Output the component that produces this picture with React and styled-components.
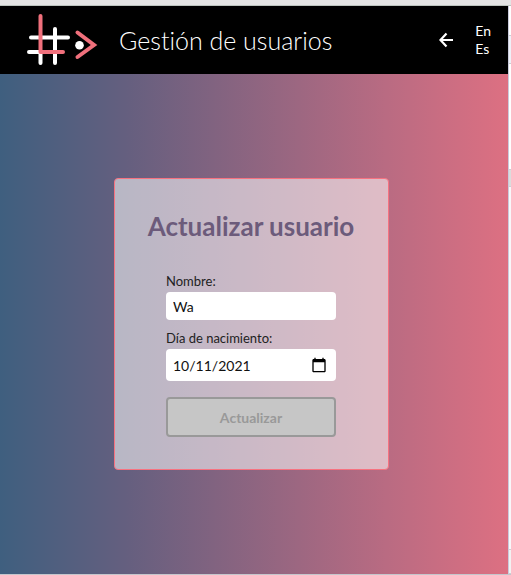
import React from "react";
import styled, { createGlobalStyle } from "styled-components";

const GlobalStyle = createGlobalStyle`
  * { box-sizing: border-box; }
  body {
    margin: 0;
    font-family: Lato, "Open Sans", sans-serif;
    font-variant-ligatures: none;
    background: #f2f2f5;
  }
  button, input { font-family: inherit; }
`;

const Frame = styled.div`
  display: grid;
  grid-template-columns: minmax(0, 1fr) 3px;
  grid-template-rows: 6px minmax(0, 1fr) 1px;
  min-height: 100vh;
`;

const TopEdge = styled.div`
  grid-column: 1 / -1;
  background: #e4e4e4;
  border-bottom: 1px solid #bcc4be;
`;

const BottomEdge = styled.div`
  grid-column: 1 / -1;
  background: #c4c6cc;
`;

const SideEdge = styled.div`
  display: grid;
  grid-template-rows: 30px 28px 106px 17px 1fr 24px;
  border-left: 1px solid #c9cbdc;
`;

const EdgePart = styled.div`
  background: ${({ $tone }) => $tone};
  border-bottom: 1px solid #cdced4;
`;

const Page = styled.div`
  display: flex;
  flex-direction: column;
`;

const Header = styled.header`
  display: flex;
  align-items: center;
  height: 68px;
  padding: 0 17px 0 24px;
  background: #000;
  color: #fff;
`;

const Logo = styled.svg`
  flex: none;
  width: 76px;
  height: 68px;
`;

const Title = styled.h1`
  flex: 1;
  margin: 0 0 0 19px;
  font-size: 25px;
  line-height: 32px;
  font-weight: 300;
  white-space: nowrap;
`;

const BackButton = styled.button`
  display: flex;
  margin-right: 20px;
  padding: 0;
  border: 0;
  background: none;
  color: inherit;
`;

const Languages = styled.nav`
  display: flex;
  flex-direction: column;
`;

const LanguageButton = styled.button`
  padding: 0;
  border: 0;
  background: none;
  color: inherit;
  font-size: 14px;
  line-height: 18px;
  text-align: left;
`;

const Main = styled.main`
  flex: 1;
  display: flex;
  align-items: center;
  justify-content: center;
  padding: 24px 6px 24px 0;
  background: linear-gradient(90deg, #3f5f7f 0%, #655f7f 25%, #b96b82 76%, #dd7082 100%);
`;

const Card = styled.form`
  display: flex;
  flex-direction: column;
  align-items: center;
  padding: 31px 32px 32px;
  width: 275px;
  border: 1px solid #f67280;
  border-radius: 4px;
  background: rgba(255, 255, 255, 0.55);
`;

const CardTitle = styled.h2`
  margin: 0 0 31px;
  color: #6c5b7b;
  font-size: 26px;
  line-height: 32px;
  font-weight: 700;
  white-space: nowrap;
`;

const Field = styled.div`
  display: flex;
  flex-direction: column;
  width: 170px;
  margin-bottom: ${({ $gap }) => $gap}px;
`;

const Label = styled.label`
  margin-bottom: 2px;
  color: #222;
  font-size: 13px;
  line-height: 17px;
`;

const Input = styled.input`
  width: 100%;
  height: 28px;
  padding: 0 7px;
  border: 0;
  border-radius: 4px;
  background: #fff;
  color: #111;
  font-size: 14px;
`;

const DateInput = styled(Input)`
  height: 32px;

  &::-webkit-datetime-edit-month-field,
  &::-webkit-datetime-edit-day-field,
  &::-webkit-datetime-edit-year-field {
    padding: 0;
  }

  &::-webkit-calendar-picker-indicator {
    width: 16px;
    height: 16px;
    padding: 0;
    margin-right: 2px;
    background-size: 16px 16px;
  }
`;

const Submit = styled.button`
  width: 170px;
  height: 40px;
  border: 2px solid #999;
  border-radius: 4px;
  background: #c6c6c6;
  color: #999;
  font-size: 14px;
  font-weight: 700;
`;

function BrandLogo() {
  return (
    <Logo viewBox="24 6 76 68" fill="none" strokeLinecap="round" strokeWidth="4" role="img" aria-label="Logo">
      <path d="M31 37.5H68M29 52H42M40.5 52V63M55 29V63" stroke="#fff" />
      <path d="M40.5 16V52H63" stroke="#f0707c" strokeLinejoin="round" />
      <path d="M77.5 32.5L94 45L77.5 57" stroke="#f0707c" strokeLinejoin="miter" />
      <circle cx="79.5" cy="45.2" r="4.3" fill="#fff" />
    </Logo>
  );
}

export default function App() {
  return (
    <>
      <GlobalStyle />
      <Frame>
        <TopEdge />
        <Page>
          <Header>
            <BrandLogo />
            <Title>Gestión de usuarios</Title>
            <BackButton type="button" aria-label="Volver">
              <svg width="18" height="18" viewBox="0 0 18 18" fill="none" stroke="currentColor" strokeWidth="2.2">
                <path d="M16 9H4M9.5 2.5L3.5 9L9.5 15.5" />
              </svg>
            </BackButton>
            <Languages aria-label="Idioma">
              <LanguageButton type="button">En</LanguageButton>
              <LanguageButton type="button">Es</LanguageButton>
            </Languages>
          </Header>
          <Main>
            <Card>
              <CardTitle>Actualizar usuario</CardTitle>
              <Field $gap={10}>
                <Label htmlFor="name">Nombre:</Label>
                <Input id="name" type="text" defaultValue="Wa" />
              </Field>
              <Field $gap={16}>
                <Label htmlFor="birthday">Día de nacimiento:</Label>
                <DateInput id="birthday" type="date" defaultValue="2021-10-11" />
              </Field>
              <Submit type="submit" disabled>Actualizar</Submit>
            </Card>
          </Main>
        </Page>
        <SideEdge>
          <EdgePart $tone="#fff" />
          <EdgePart $tone="#eef1f8" />
          <EdgePart $tone="#fff" />
          <EdgePart $tone="#dcdcdc" />
          <EdgePart $tone="#f8f8fa" />
          <EdgePart $tone="#f2f2f2" />
        </SideEdge>
        <BottomEdge />
      </Frame>
    </>
  );
}
